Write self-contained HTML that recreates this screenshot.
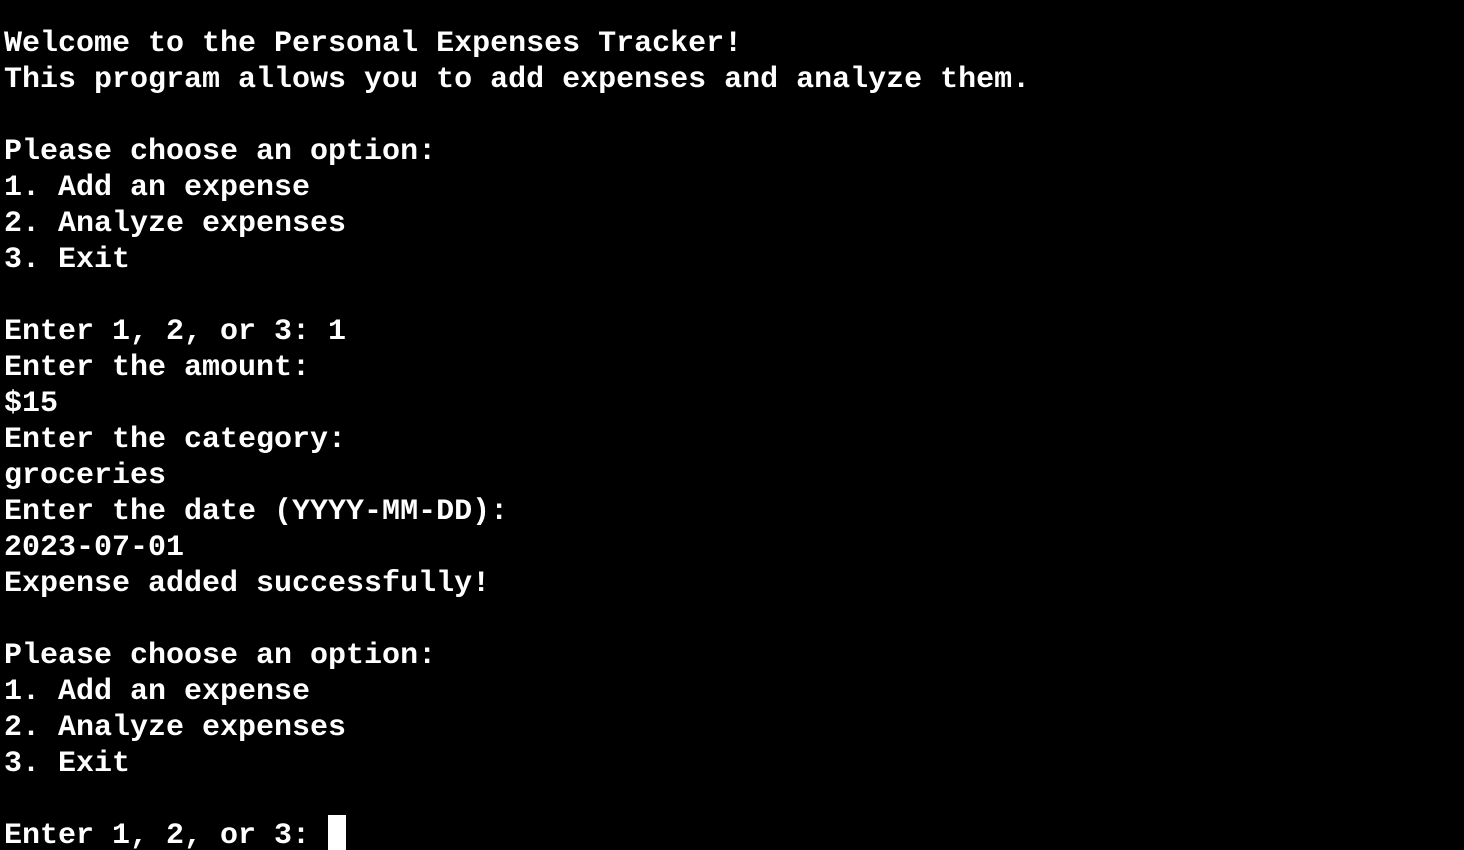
<!DOCTYPE html>
<html><head><meta charset="utf-8"><style>
html,body{margin:0;padding:0;background:#000;width:1464px;height:850px;overflow:hidden;position:relative}
pre{margin:0;padding:26px 0 0 4px;color:#fff;font-family:"Liberation Mono",monospace;font-size:30px;line-height:36px;font-weight:bold;letter-spacing:0}
.c{position:absolute;left:328px;top:815px;width:18px;height:35px;background:#fff}
</style></head><body><pre>Welcome to the Personal Expenses Tracker!
This program allows you to add expenses and analyze them.

Please choose an option:
1. Add an expense
2. Analyze expenses
3. Exit

Enter 1, 2, or 3: 1
Enter the amount:
$15
Enter the category:
groceries
Enter the date (YYYY-MM-DD):
2023-07-01
Expense added successfully!

Please choose an option:
1. Add an expense
2. Analyze expenses
3. Exit

Enter 1, 2, or 3: </pre><div class="c"></div></body></html>
